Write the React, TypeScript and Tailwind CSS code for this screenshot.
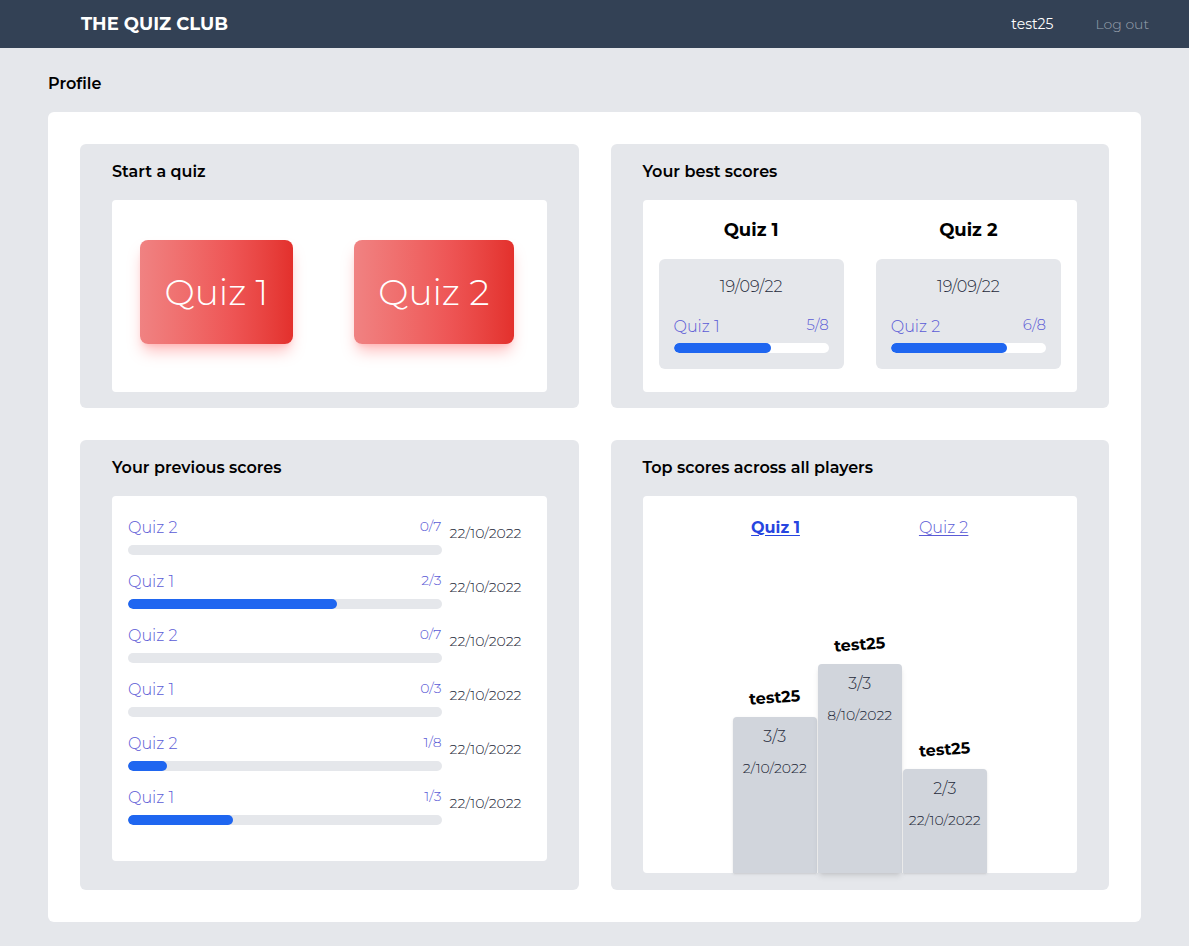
const previous = [
  { quiz: "Quiz 2", score: 0, total: 7, date: "22/10/2022" },
  { quiz: "Quiz 1", score: 2, total: 3, date: "22/10/2022" },
  { quiz: "Quiz 2", score: 0, total: 7, date: "22/10/2022" },
  { quiz: "Quiz 1", score: 0, total: 3, date: "22/10/2022" },
  { quiz: "Quiz 2", score: 1, total: 8, date: "22/10/2022" },
  { quiz: "Quiz 1", score: 1, total: 3, date: "22/10/2022" },
];

const best = [
  { quiz: "Quiz 1", date: "19/09/22", score: 5, total: 8 },
  { quiz: "Quiz 2", date: "19/09/22", score: 6, total: 8 },
];

const podium = [
  { name: "test25", score: "3/3", date: "2/10/2022", height: 156, shadow: "shadow" },
  { name: "test25", score: "3/3", date: "8/10/2022", height: 209, shadow: "shadow-md" },
  { name: "test25", score: "2/3", date: "22/10/2022", height: 104, shadow: "shadow" },
];

function Panel({ title, children }: { title: string; children: React.ReactNode }) {
  return (
    <section className="flex flex-col gap-4 rounded-md bg-gray-200 px-8 pt-4">
      <h2 className="h-6 text-base font-semibold leading-6 text-black">{title}</h2>
      {children}
    </section>
  );
}

function Bar({ pct, track }: { pct: number; track: string }) {
  return (
    <div className={`h-2.5 w-full overflow-hidden rounded-full ${track}`}>
      <div className="h-full rounded-full bg-[#1f66f0]" style={{ width: `${pct}%` }} />
    </div>
  );
}

export default function App() {
  return (
    <div className="min-h-screen bg-gray-200 font-['Montserrat','Inter','DejaVu_Sans',sans-serif] text-gray-800">
      <header className="flex h-12 items-center justify-between bg-[#334155] pl-[81px] pr-10">
        <span className="text-lg font-bold text-white">THE QUIZ CLUB</span>
        <nav className="flex items-center gap-[42px] text-sm">
          <span className="text-white">test25</span>
          <span className="font-light text-gray-400">Log out</span>
        </nav>
      </header>

      <main className="px-12 pb-6 pt-6">
        <h1 className="mb-[16px] h-6 text-base font-semibold leading-6 text-black">Profile</h1>

        <div className="grid grid-cols-2 grid-rows-[264px_450px] gap-8 rounded-md bg-white p-8">
          <Panel title="Start a quiz">
            <div className="flex h-[192px] items-start gap-[61px] rounded bg-white pl-[28px] pt-10">
              {["Quiz 1", "Quiz 2"].map((q) => (
                <button
                  key={q}
                  className="rounded-lg bg-gradient-to-r from-[#f08282] via-[#ee5555] via-60% to-[#e3302c] px-[24.5px] py-8 text-4xl font-light leading-10 text-white shadow-lg shadow-red-300/70"
                >
                  {q}
                </button>
              ))}
            </div>
          </Panel>

          <Panel title="Your best scores">
            <div className="grid h-[192px] grid-cols-2 gap-8 rounded bg-white px-4 pt-4">
              {best.map((b) => (
                <div key={b.quiz} className="flex flex-col">
                  <h3 className="h-7 text-center text-lg font-bold leading-7 text-black">{b.quiz}</h3>
                  <div className="mt-[15px] flex flex-col rounded-md bg-gray-200 px-[15px] pb-[16px] pt-[18px]">
                    <div className="h-5 text-center text-base font-light leading-5 text-gray-800">{b.date}</div>
                    <div className="mt-5 flex h-5 items-start justify-between">
                      <span className="text-base font-light leading-5 text-[#5b5bd6]">{b.quiz}</span>
                      <span className="text-[15px] font-light leading-4 text-[#5b5bd6]">
                        {b.score}/{b.total}
                      </span>
                    </div>
                    <div className="mt-1.5">
                      <Bar pct={(b.score / b.total) * 100} track="bg-white" />
                    </div>
                  </div>
                </div>
              ))}
            </div>
          </Panel>

          <Panel title="Your previous scores">
            <div className="flex h-[365px] flex-col gap-[17px] rounded bg-white pl-4 pr-[25px] pt-[22px]">
              {previous.map((p, i) => (
                <div key={i} className="flex items-start">
                  <div className="flex-1">
                    <div className="flex h-5 items-start justify-between">
                      <span className="text-base font-light leading-5 text-[#5b5bd6]">{p.quiz}</span>
                      <span className="text-sm font-light leading-4 text-[#5b5bd6]">
                        {p.score}/{p.total}
                      </span>
                    </div>
                    <div className="mt-[7px]">
                      <Bar pct={(p.score / p.total) * 100} track="bg-gray-200" />
                    </div>
                  </div>
                  <span className="mt-[5px] w-[80px] pl-2 text-right text-sm font-light leading-5 text-gray-800">
                    {p.date}
                  </span>
                </div>
              ))}
            </div>
          </Panel>

          <Panel title="Top scores across all players">
            <div className="flex h-[377px] flex-col rounded bg-white">
              <div className="flex justify-center gap-[119px] pt-[22px] text-base leading-5">
                <span className="font-bold text-[#2645e0] underline underline-offset-2">Quiz 1</span>
                <span className="font-light text-[#5b5bd6] underline underline-offset-2">Quiz 2</span>
              </div>
              <div className="flex flex-1 items-end justify-center gap-px">
                {podium.map((p, i) => (
                  <div key={i} className="flex w-[84px] flex-col items-center">
                    <span className="mb-[7px] h-6 rotate-[-4deg] text-base font-bold leading-6 text-black">{p.name}</span>
                    <div
                      className={`flex w-full flex-col items-center rounded-t bg-gray-300 pt-[10px] ${p.shadow}`}
                      style={{ height: p.height }}
                    >
                      <span className="text-base font-light leading-5 text-gray-800">{p.score}</span>
                      <span className="mt-[11px] text-sm font-light leading-5 text-gray-800">{p.date}</span>
                    </div>
                  </div>
                ))}
              </div>
            </div>
          </Panel>
        </div>
      </main>
    </div>
  );
}
